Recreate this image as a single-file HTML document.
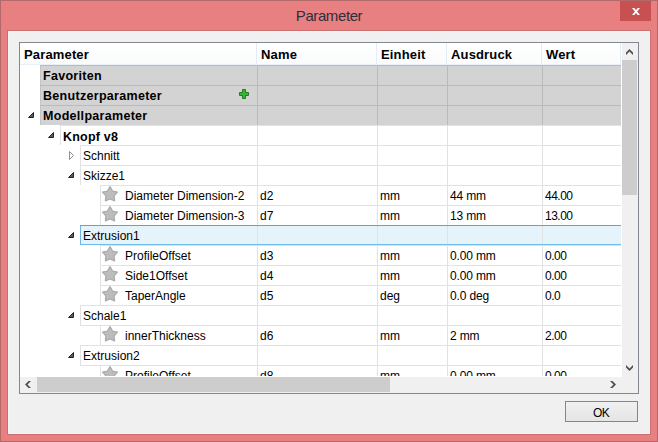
<!DOCTYPE html>
<html><head><meta charset="utf-8"><style>
html,body{margin:0;padding:0;}
body{width:658px;height:442px;position:relative;overflow:hidden;font-family:"Liberation Sans", sans-serif;}
</style></head><body>
<div style="position:absolute;left:0px;top:0px;width:658px;height:442px;background:#e87f80;box-sizing:border-box;border:1px solid #b1696a;"></div>
<div style="position:absolute;left:0;top:6px;width:658px;text-align:center;font-size:15px;line-height:20px;color:#2e2e3c;letter-spacing:-0.4px;">Parameter</div>
<div style="position:absolute;left:620px;top:1px;width:31px;height:20px;background:#c75050;"></div>
<svg style="position:absolute;left:630px;top:7px" width="12" height="10" viewBox="0 0 12 10"><path d="M2 1h2.3L10 8H7.7Z M7.7 1H10L4.3 8H2Z" fill="#fff"/></svg>
<div style="position:absolute;left:7px;top:30px;width:644px;height:405px;background:#c96f70;"></div>
<div style="position:absolute;left:8px;top:31px;width:642px;height:403px;background:#f0f0f0;box-sizing:border-box;border:1px solid #f3f6f6;"></div>
<div style="position:absolute;left:19px;top:42px;width:620px;height:352px;background:#fff;box-sizing:border-box;border:1px solid #828790;"></div>
<div style="position:absolute;left:20px;top:43px;width:601px;height:21px;background:linear-gradient(#ffffff,#fafbfc);"></div>
<div style="position:absolute;left:256px;top:43px;width:1px;height:21px;background:#e3ecf6;"></div>
<div style="position:absolute;left:376px;top:43px;width:1px;height:21px;background:#e3ecf6;"></div>
<div style="position:absolute;left:446px;top:43px;width:1px;height:21px;background:#e3ecf6;"></div>
<div style="position:absolute;left:541px;top:43px;width:1px;height:21px;background:#e3ecf6;"></div>
<div style="position:absolute;left:620px;top:43px;width:1px;height:21px;background:#e3ecf6;"></div>
<div style="position:absolute;left:20px;top:64px;width:601px;height:1px;background:#eaf0f8;"></div>
<div style="position:absolute;left:24px;top:45px;height:20px;line-height:20px;white-space:nowrap;font-size:13px;font-weight:700;color:#000;letter-spacing:0.15px;">Parameter</div>
<div style="position:absolute;left:261px;top:45px;height:20px;line-height:20px;white-space:nowrap;font-size:13px;font-weight:700;color:#000;letter-spacing:0.15px;">Name</div>
<div style="position:absolute;left:381px;top:45px;height:20px;line-height:20px;white-space:nowrap;font-size:13px;font-weight:700;color:#000;letter-spacing:0.15px;">Einheit</div>
<div style="position:absolute;left:451px;top:45px;height:20px;line-height:20px;white-space:nowrap;font-size:13px;font-weight:700;color:#000;letter-spacing:0.15px;">Ausdruck</div>
<div style="position:absolute;left:546px;top:45px;height:20px;line-height:20px;white-space:nowrap;font-size:13px;font-weight:700;color:#000;letter-spacing:0.15px;">Wert</div>
<div style="position:absolute;left:40px;top:65px;width:581px;height:60px;background:#d3d3d3;"></div>
<div style="position:absolute;left:40px;top:65px;width:1px;height:60px;background:#c4c4c4;"></div>
<div style="position:absolute;left:40px;top:65px;width:581px;height:1px;background:#bababa;"></div>
<div style="position:absolute;left:40px;top:85px;width:581px;height:1px;background:#bababa;"></div>
<div style="position:absolute;left:40px;top:105px;width:581px;height:1px;background:#bababa;"></div>
<div style="position:absolute;left:257px;top:65px;width:1px;height:60px;background:#bababa;"></div>
<div style="position:absolute;left:377px;top:65px;width:1px;height:60px;background:#bababa;"></div>
<div style="position:absolute;left:447px;top:65px;width:1px;height:60px;background:#bababa;"></div>
<div style="position:absolute;left:542px;top:65px;width:1px;height:60px;background:#bababa;"></div>
<div style="position:absolute;left:43px;top:66px;height:20px;line-height:20px;white-space:nowrap;font-size:12.5px;font-weight:700;color:#000;letter-spacing:0.3px;">Favoriten</div>
<div style="position:absolute;left:43px;top:86px;height:20px;line-height:20px;white-space:nowrap;font-size:12.5px;font-weight:700;color:#000;letter-spacing:0.3px;">Benutzerparameter</div>
<div style="position:absolute;left:43px;top:106px;height:20px;line-height:20px;white-space:nowrap;font-size:12.5px;font-weight:700;color:#000;letter-spacing:0.3px;">Modellparameter</div>
<svg style="position:absolute;left:238px;top:88px" width="12" height="12" viewBox="0 0 12 12"><path d="M4.5 1.5h3v3h3v3h-3v3h-3v-3h-3v-3h3z" fill="#39b339" stroke="#1f7f1f" stroke-width="1" stroke-linejoin="round"/></svg>
<svg style="position:absolute;left:28px;top:112px" width="7" height="7" viewBox="0 0 7 7"><path d="M0.5 5.5 L5.5 0.5 L5.5 5.5 Z" fill="#5a5a5a" stroke="#262626" stroke-width="1" stroke-linejoin="round"/></svg>
<div style="position:absolute;left:20px;top:125px;width:601px;height:251px;overflow:hidden;">
<div style="position:absolute;left:40px;top:0px;width:561px;height:1px;background:#e2e2e2;"></div>
<div style="position:absolute;left:40px;top:0px;width:1px;height:20px;background:#e2e2e2;"></div>
<div style="position:absolute;left:237px;top:0px;width:1px;height:20px;background:#e2e2e2;"></div>
<div style="position:absolute;left:357px;top:0px;width:1px;height:20px;background:#e2e2e2;"></div>
<div style="position:absolute;left:427px;top:0px;width:1px;height:20px;background:#e2e2e2;"></div>
<div style="position:absolute;left:522px;top:0px;width:1px;height:20px;background:#e2e2e2;"></div>
<svg style="position:absolute;left:28px;top:7px" width="7" height="7" viewBox="0 0 7 7"><path d="M0.5 5.5 L5.5 0.5 L5.5 5.5 Z" fill="#5a5a5a" stroke="#262626" stroke-width="1" stroke-linejoin="round"/></svg>
<div style="position:absolute;left:43px;top:2px;height:20px;line-height:20px;white-space:nowrap;font-size:12.5px;font-weight:700;color:#000;letter-spacing:0.2px;">Knopf v8</div>
<div style="position:absolute;left:60px;top:20px;width:541px;height:1px;background:#e2e2e2;"></div>
<div style="position:absolute;left:60px;top:20px;width:1px;height:20px;background:#e2e2e2;"></div>
<div style="position:absolute;left:237px;top:20px;width:1px;height:20px;background:#e2e2e2;"></div>
<div style="position:absolute;left:357px;top:20px;width:1px;height:20px;background:#e2e2e2;"></div>
<div style="position:absolute;left:427px;top:20px;width:1px;height:20px;background:#e2e2e2;"></div>
<div style="position:absolute;left:522px;top:20px;width:1px;height:20px;background:#e2e2e2;"></div>
<svg style="position:absolute;left:49px;top:26px" width="7" height="10" viewBox="0 0 7 10"><path d="M0.5 0.5 L0.5 8.5 L4.5 4.5 Z" fill="#fff" stroke="#8e8e8e" stroke-width="1" stroke-linejoin="round"/></svg>
<div style="position:absolute;left:63px;top:21px;height:20px;line-height:20px;white-space:nowrap;font-size:12px;font-weight:400;color:#000;">Schnitt</div>
<div style="position:absolute;left:60px;top:40px;width:541px;height:1px;background:#e2e2e2;"></div>
<div style="position:absolute;left:60px;top:40px;width:1px;height:20px;background:#e2e2e2;"></div>
<div style="position:absolute;left:237px;top:40px;width:1px;height:20px;background:#e2e2e2;"></div>
<div style="position:absolute;left:357px;top:40px;width:1px;height:20px;background:#e2e2e2;"></div>
<div style="position:absolute;left:427px;top:40px;width:1px;height:20px;background:#e2e2e2;"></div>
<div style="position:absolute;left:522px;top:40px;width:1px;height:20px;background:#e2e2e2;"></div>
<svg style="position:absolute;left:48px;top:47px" width="7" height="7" viewBox="0 0 7 7"><path d="M0.5 5.5 L5.5 0.5 L5.5 5.5 Z" fill="#5a5a5a" stroke="#262626" stroke-width="1" stroke-linejoin="round"/></svg>
<div style="position:absolute;left:63px;top:41px;height:20px;line-height:20px;white-space:nowrap;font-size:12px;font-weight:400;color:#000;">Skizze1</div>
<div style="position:absolute;left:80px;top:60px;width:521px;height:1px;background:#e2e2e2;"></div>
<div style="position:absolute;left:80px;top:60px;width:1px;height:20px;background:#e2e2e2;"></div>
<div style="position:absolute;left:237px;top:60px;width:1px;height:20px;background:#e2e2e2;"></div>
<div style="position:absolute;left:357px;top:60px;width:1px;height:20px;background:#e2e2e2;"></div>
<div style="position:absolute;left:427px;top:60px;width:1px;height:20px;background:#e2e2e2;"></div>
<div style="position:absolute;left:522px;top:60px;width:1px;height:20px;background:#e2e2e2;"></div>
<svg style="position:absolute;left:80px;top:59px" width="20" height="20" viewBox="0 0 20 20"><polygon points="10.00,2.70 12.53,7.02 17.42,8.09 14.09,11.83 14.58,16.81 10.00,14.80 5.42,16.81 5.91,11.83 2.58,8.09 7.47,7.02" fill="#bdbdbd" stroke="#acacac" stroke-width="1.3" stroke-linejoin="round"/></svg>
<div style="position:absolute;left:105px;top:61px;height:20px;line-height:20px;white-space:nowrap;font-size:12px;font-weight:400;color:#000;">Diameter Dimension-2</div>
<div style="position:absolute;left:240px;top:61px;height:20px;line-height:20px;white-space:nowrap;font-size:12px;font-weight:400;color:#000;">d2</div>
<div style="position:absolute;left:360px;top:61px;height:20px;line-height:20px;white-space:nowrap;font-size:12px;font-weight:400;color:#000;">mm</div>
<div style="position:absolute;left:430px;top:61px;height:20px;line-height:20px;white-space:nowrap;font-size:12px;font-weight:400;color:#000;letter-spacing:-0.15px;">44 mm</div>
<div style="position:absolute;left:525px;top:61px;height:20px;line-height:20px;white-space:nowrap;font-size:12px;font-weight:400;color:#000;letter-spacing:-0.5px;">44.00</div>
<div style="position:absolute;left:80px;top:80px;width:521px;height:1px;background:#e2e2e2;"></div>
<div style="position:absolute;left:80px;top:80px;width:1px;height:20px;background:#e2e2e2;"></div>
<div style="position:absolute;left:237px;top:80px;width:1px;height:20px;background:#e2e2e2;"></div>
<div style="position:absolute;left:357px;top:80px;width:1px;height:20px;background:#e2e2e2;"></div>
<div style="position:absolute;left:427px;top:80px;width:1px;height:20px;background:#e2e2e2;"></div>
<div style="position:absolute;left:522px;top:80px;width:1px;height:20px;background:#e2e2e2;"></div>
<svg style="position:absolute;left:80px;top:79px" width="20" height="20" viewBox="0 0 20 20"><polygon points="10.00,2.70 12.53,7.02 17.42,8.09 14.09,11.83 14.58,16.81 10.00,14.80 5.42,16.81 5.91,11.83 2.58,8.09 7.47,7.02" fill="#bdbdbd" stroke="#acacac" stroke-width="1.3" stroke-linejoin="round"/></svg>
<div style="position:absolute;left:105px;top:81px;height:20px;line-height:20px;white-space:nowrap;font-size:12px;font-weight:400;color:#000;">Diameter Dimension-3</div>
<div style="position:absolute;left:240px;top:81px;height:20px;line-height:20px;white-space:nowrap;font-size:12px;font-weight:400;color:#000;">d7</div>
<div style="position:absolute;left:360px;top:81px;height:20px;line-height:20px;white-space:nowrap;font-size:12px;font-weight:400;color:#000;">mm</div>
<div style="position:absolute;left:430px;top:81px;height:20px;line-height:20px;white-space:nowrap;font-size:12px;font-weight:400;color:#000;letter-spacing:-0.15px;">13 mm</div>
<div style="position:absolute;left:525px;top:81px;height:20px;line-height:20px;white-space:nowrap;font-size:12px;font-weight:400;color:#000;letter-spacing:-0.5px;">13.00</div>
<div style="position:absolute;left:60px;top:100px;width:545px;height:20px;background:#e5f3fb;box-sizing:border-box;border:1px solid #6db4e2;border-top-color:#5fa3d3;border-bottom-color:#6fbce8;"></div>
<div style="position:absolute;left:237px;top:101px;width:1px;height:18px;background:#e2e2e2;"></div>
<div style="position:absolute;left:357px;top:101px;width:1px;height:18px;background:#e2e2e2;"></div>
<div style="position:absolute;left:427px;top:101px;width:1px;height:18px;background:#e2e2e2;"></div>
<div style="position:absolute;left:522px;top:101px;width:1px;height:18px;background:#e2e2e2;"></div>
<svg style="position:absolute;left:48px;top:107px" width="7" height="7" viewBox="0 0 7 7"><path d="M0.5 5.5 L5.5 0.5 L5.5 5.5 Z" fill="#5a5a5a" stroke="#262626" stroke-width="1" stroke-linejoin="round"/></svg>
<div style="position:absolute;left:63px;top:101px;height:20px;line-height:20px;white-space:nowrap;font-size:12px;font-weight:400;color:#000;">Extrusion1</div>
<div style="position:absolute;left:80px;top:120px;width:521px;height:1px;background:#e2e2e2;"></div>
<div style="position:absolute;left:80px;top:120px;width:1px;height:20px;background:#e2e2e2;"></div>
<div style="position:absolute;left:237px;top:120px;width:1px;height:20px;background:#e2e2e2;"></div>
<div style="position:absolute;left:357px;top:120px;width:1px;height:20px;background:#e2e2e2;"></div>
<div style="position:absolute;left:427px;top:120px;width:1px;height:20px;background:#e2e2e2;"></div>
<div style="position:absolute;left:522px;top:120px;width:1px;height:20px;background:#e2e2e2;"></div>
<svg style="position:absolute;left:80px;top:119px" width="20" height="20" viewBox="0 0 20 20"><polygon points="10.00,2.70 12.53,7.02 17.42,8.09 14.09,11.83 14.58,16.81 10.00,14.80 5.42,16.81 5.91,11.83 2.58,8.09 7.47,7.02" fill="#bdbdbd" stroke="#acacac" stroke-width="1.3" stroke-linejoin="round"/></svg>
<div style="position:absolute;left:105px;top:121px;height:20px;line-height:20px;white-space:nowrap;font-size:12px;font-weight:400;color:#000;">ProfileOffset</div>
<div style="position:absolute;left:240px;top:121px;height:20px;line-height:20px;white-space:nowrap;font-size:12px;font-weight:400;color:#000;">d3</div>
<div style="position:absolute;left:360px;top:121px;height:20px;line-height:20px;white-space:nowrap;font-size:12px;font-weight:400;color:#000;">mm</div>
<div style="position:absolute;left:430px;top:121px;height:20px;line-height:20px;white-space:nowrap;font-size:12px;font-weight:400;color:#000;letter-spacing:-0.15px;">0.00 mm</div>
<div style="position:absolute;left:525px;top:121px;height:20px;line-height:20px;white-space:nowrap;font-size:12px;font-weight:400;color:#000;letter-spacing:-0.5px;">0.00</div>
<div style="position:absolute;left:80px;top:140px;width:521px;height:1px;background:#e2e2e2;"></div>
<div style="position:absolute;left:80px;top:140px;width:1px;height:20px;background:#e2e2e2;"></div>
<div style="position:absolute;left:237px;top:140px;width:1px;height:20px;background:#e2e2e2;"></div>
<div style="position:absolute;left:357px;top:140px;width:1px;height:20px;background:#e2e2e2;"></div>
<div style="position:absolute;left:427px;top:140px;width:1px;height:20px;background:#e2e2e2;"></div>
<div style="position:absolute;left:522px;top:140px;width:1px;height:20px;background:#e2e2e2;"></div>
<svg style="position:absolute;left:80px;top:139px" width="20" height="20" viewBox="0 0 20 20"><polygon points="10.00,2.70 12.53,7.02 17.42,8.09 14.09,11.83 14.58,16.81 10.00,14.80 5.42,16.81 5.91,11.83 2.58,8.09 7.47,7.02" fill="#bdbdbd" stroke="#acacac" stroke-width="1.3" stroke-linejoin="round"/></svg>
<div style="position:absolute;left:105px;top:141px;height:20px;line-height:20px;white-space:nowrap;font-size:12px;font-weight:400;color:#000;">Side1Offset</div>
<div style="position:absolute;left:240px;top:141px;height:20px;line-height:20px;white-space:nowrap;font-size:12px;font-weight:400;color:#000;">d4</div>
<div style="position:absolute;left:360px;top:141px;height:20px;line-height:20px;white-space:nowrap;font-size:12px;font-weight:400;color:#000;">mm</div>
<div style="position:absolute;left:430px;top:141px;height:20px;line-height:20px;white-space:nowrap;font-size:12px;font-weight:400;color:#000;letter-spacing:-0.15px;">0.00 mm</div>
<div style="position:absolute;left:525px;top:141px;height:20px;line-height:20px;white-space:nowrap;font-size:12px;font-weight:400;color:#000;letter-spacing:-0.5px;">0.00</div>
<div style="position:absolute;left:80px;top:160px;width:521px;height:1px;background:#e2e2e2;"></div>
<div style="position:absolute;left:80px;top:160px;width:1px;height:20px;background:#e2e2e2;"></div>
<div style="position:absolute;left:237px;top:160px;width:1px;height:20px;background:#e2e2e2;"></div>
<div style="position:absolute;left:357px;top:160px;width:1px;height:20px;background:#e2e2e2;"></div>
<div style="position:absolute;left:427px;top:160px;width:1px;height:20px;background:#e2e2e2;"></div>
<div style="position:absolute;left:522px;top:160px;width:1px;height:20px;background:#e2e2e2;"></div>
<svg style="position:absolute;left:80px;top:159px" width="20" height="20" viewBox="0 0 20 20"><polygon points="10.00,2.70 12.53,7.02 17.42,8.09 14.09,11.83 14.58,16.81 10.00,14.80 5.42,16.81 5.91,11.83 2.58,8.09 7.47,7.02" fill="#bdbdbd" stroke="#acacac" stroke-width="1.3" stroke-linejoin="round"/></svg>
<div style="position:absolute;left:105px;top:161px;height:20px;line-height:20px;white-space:nowrap;font-size:12px;font-weight:400;color:#000;">TaperAngle</div>
<div style="position:absolute;left:240px;top:161px;height:20px;line-height:20px;white-space:nowrap;font-size:12px;font-weight:400;color:#000;">d5</div>
<div style="position:absolute;left:360px;top:161px;height:20px;line-height:20px;white-space:nowrap;font-size:12px;font-weight:400;color:#000;">deg</div>
<div style="position:absolute;left:430px;top:161px;height:20px;line-height:20px;white-space:nowrap;font-size:12px;font-weight:400;color:#000;letter-spacing:-0.15px;">0.0 deg</div>
<div style="position:absolute;left:525px;top:161px;height:20px;line-height:20px;white-space:nowrap;font-size:12px;font-weight:400;color:#000;letter-spacing:-0.5px;">0.0</div>
<div style="position:absolute;left:60px;top:180px;width:541px;height:1px;background:#e2e2e2;"></div>
<div style="position:absolute;left:60px;top:180px;width:1px;height:20px;background:#e2e2e2;"></div>
<div style="position:absolute;left:237px;top:180px;width:1px;height:20px;background:#e2e2e2;"></div>
<div style="position:absolute;left:357px;top:180px;width:1px;height:20px;background:#e2e2e2;"></div>
<div style="position:absolute;left:427px;top:180px;width:1px;height:20px;background:#e2e2e2;"></div>
<div style="position:absolute;left:522px;top:180px;width:1px;height:20px;background:#e2e2e2;"></div>
<svg style="position:absolute;left:48px;top:187px" width="7" height="7" viewBox="0 0 7 7"><path d="M0.5 5.5 L5.5 0.5 L5.5 5.5 Z" fill="#5a5a5a" stroke="#262626" stroke-width="1" stroke-linejoin="round"/></svg>
<div style="position:absolute;left:63px;top:181px;height:20px;line-height:20px;white-space:nowrap;font-size:12px;font-weight:400;color:#000;">Schale1</div>
<div style="position:absolute;left:60px;top:200px;width:541px;height:1px;background:#e2e2e2;"></div>
<div style="position:absolute;left:80px;top:200px;width:1px;height:20px;background:#e2e2e2;"></div>
<div style="position:absolute;left:237px;top:200px;width:1px;height:20px;background:#e2e2e2;"></div>
<div style="position:absolute;left:357px;top:200px;width:1px;height:20px;background:#e2e2e2;"></div>
<div style="position:absolute;left:427px;top:200px;width:1px;height:20px;background:#e2e2e2;"></div>
<div style="position:absolute;left:522px;top:200px;width:1px;height:20px;background:#e2e2e2;"></div>
<svg style="position:absolute;left:80px;top:199px" width="20" height="20" viewBox="0 0 20 20"><polygon points="10.00,2.70 12.53,7.02 17.42,8.09 14.09,11.83 14.58,16.81 10.00,14.80 5.42,16.81 5.91,11.83 2.58,8.09 7.47,7.02" fill="#bdbdbd" stroke="#acacac" stroke-width="1.3" stroke-linejoin="round"/></svg>
<div style="position:absolute;left:105px;top:201px;height:20px;line-height:20px;white-space:nowrap;font-size:12px;font-weight:400;color:#000;">innerThickness</div>
<div style="position:absolute;left:240px;top:201px;height:20px;line-height:20px;white-space:nowrap;font-size:12px;font-weight:400;color:#000;">d6</div>
<div style="position:absolute;left:360px;top:201px;height:20px;line-height:20px;white-space:nowrap;font-size:12px;font-weight:400;color:#000;">mm</div>
<div style="position:absolute;left:430px;top:201px;height:20px;line-height:20px;white-space:nowrap;font-size:12px;font-weight:400;color:#000;letter-spacing:-0.15px;">2 mm</div>
<div style="position:absolute;left:525px;top:201px;height:20px;line-height:20px;white-space:nowrap;font-size:12px;font-weight:400;color:#000;letter-spacing:-0.5px;">2.00</div>
<div style="position:absolute;left:60px;top:220px;width:541px;height:1px;background:#e2e2e2;"></div>
<div style="position:absolute;left:60px;top:220px;width:1px;height:20px;background:#e2e2e2;"></div>
<div style="position:absolute;left:237px;top:220px;width:1px;height:20px;background:#e2e2e2;"></div>
<div style="position:absolute;left:357px;top:220px;width:1px;height:20px;background:#e2e2e2;"></div>
<div style="position:absolute;left:427px;top:220px;width:1px;height:20px;background:#e2e2e2;"></div>
<div style="position:absolute;left:522px;top:220px;width:1px;height:20px;background:#e2e2e2;"></div>
<svg style="position:absolute;left:48px;top:227px" width="7" height="7" viewBox="0 0 7 7"><path d="M0.5 5.5 L5.5 0.5 L5.5 5.5 Z" fill="#5a5a5a" stroke="#262626" stroke-width="1" stroke-linejoin="round"/></svg>
<div style="position:absolute;left:63px;top:221px;height:20px;line-height:20px;white-space:nowrap;font-size:12px;font-weight:400;color:#000;">Extrusion2</div>
<div style="position:absolute;left:60px;top:240px;width:541px;height:1px;background:#e2e2e2;"></div>
<div style="position:absolute;left:80px;top:240px;width:1px;height:20px;background:#e2e2e2;"></div>
<div style="position:absolute;left:237px;top:240px;width:1px;height:20px;background:#e2e2e2;"></div>
<div style="position:absolute;left:357px;top:240px;width:1px;height:20px;background:#e2e2e2;"></div>
<div style="position:absolute;left:427px;top:240px;width:1px;height:20px;background:#e2e2e2;"></div>
<div style="position:absolute;left:522px;top:240px;width:1px;height:20px;background:#e2e2e2;"></div>
<svg style="position:absolute;left:80px;top:239px" width="20" height="20" viewBox="0 0 20 20"><polygon points="10.00,2.70 12.53,7.02 17.42,8.09 14.09,11.83 14.58,16.81 10.00,14.80 5.42,16.81 5.91,11.83 2.58,8.09 7.47,7.02" fill="#bdbdbd" stroke="#acacac" stroke-width="1.3" stroke-linejoin="round"/></svg>
<div style="position:absolute;left:105px;top:241px;height:20px;line-height:20px;white-space:nowrap;font-size:12px;font-weight:400;color:#000;">ProfileOffset</div>
<div style="position:absolute;left:240px;top:241px;height:20px;line-height:20px;white-space:nowrap;font-size:12px;font-weight:400;color:#000;">d8</div>
<div style="position:absolute;left:360px;top:241px;height:20px;line-height:20px;white-space:nowrap;font-size:12px;font-weight:400;color:#000;">mm</div>
<div style="position:absolute;left:430px;top:241px;height:20px;line-height:20px;white-space:nowrap;font-size:12px;font-weight:400;color:#000;letter-spacing:-0.15px;">0.00 mm</div>
<div style="position:absolute;left:525px;top:241px;height:20px;line-height:20px;white-space:nowrap;font-size:12px;font-weight:400;color:#000;letter-spacing:-0.5px;">0.00</div>
</div>
<div style="position:absolute;left:622px;top:43px;width:16px;height:334px;background:#f0f0f0;"></div>
<div style="position:absolute;left:622px;top:60px;width:15px;height:135px;background:#cdcdcd;"></div>
<div style="position:absolute;left:20px;top:377px;width:618px;height:16px;background:#f0f0f0;"></div>
<div style="position:absolute;left:37px;top:377px;width:353px;height:15px;background:#cdcdcd;"></div>
<svg style="position:absolute;left:0;top:0" width="658" height="442" viewBox="0 0 658 442"><g fill="#505050"><path d="M626 55V52.5L629.5 49L633 52.5V55L629.5 51.5Z"/><path d="M626 365V367.5L629.5 371L633 367.5V365L629.5 368.5Z"/><path d="M31 381H28.5L25 384.5L28.5 388H31L27.5 384.5Z"/><path d="M610 381H612.5L616 384.5L612.5 388H610L613.5 384.5Z"/></g></svg>
<div style="position:absolute;left:565px;top:401px;width:73px;height:21px;background:linear-gradient(#f0f0f0,#e5e5e5);box-sizing:border-box;border:1px solid #3399ff;"></div>
<div style="position:absolute;left:565px;top:403px;width:73px;height:21px;line-height:21px;text-align:center;font-size:12px;color:#000;letter-spacing:-0.6px;text-indent:-1px;">OK</div>
</body></html>
